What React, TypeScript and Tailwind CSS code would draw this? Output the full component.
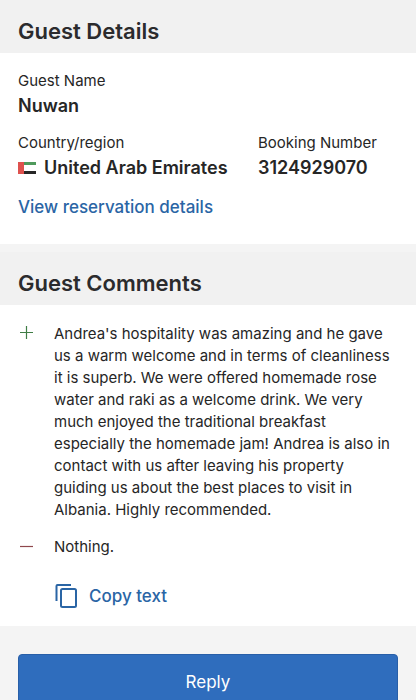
import type { ReactNode } from "react";

function SectionHeader({ children }: { children: ReactNode }) {
  return (
    <header className="bg-[#f1f1f1] px-[18px] pt-[17px] pb-2">
      <h2 className="text-[22px] leading-7 font-semibold text-[#2b2b2d]">
        {children}
      </h2>
    </header>
  );
}

function Detail({ label, children }: { label: string; children: ReactNode }) {
  return (
    <div>
      <dt className="text-[15px] leading-6">{label}</dt>
      <dd className="flex items-center gap-2 text-lg leading-[26px] font-semibold">
        {children}
      </dd>
    </div>
  );
}

function Flag() {
  return (
    <svg viewBox="0 0 18 12" className="h-3 w-[18px] shrink-0" aria-hidden>
      <path fill="#fff" d="M0 0h18v12H0z" />
      <path fill="#4f9a5c" d="M6 0h12v3H6z" />
      <path fill="#262626" d="M6 9h12v3H6z" />
      <path fill="#de524e" d="M0 0h6v12H0z" />
    </svg>
  );
}

export default function App() {
  return (
    <main className="min-h-screen bg-white font-['Inter',sans-serif] text-[#262626]">
      <section>
        <SectionHeader>Guest Details</SectionHeader>
        <dl className="grid grid-cols-[240px_1fr] gap-y-3 px-[18px] pt-4">
          <div className="col-span-2">
            <Detail label="Guest Name">Nuwan</Detail>
          </div>
          <Detail label="Country/region">
            <Flag />
            United Arab Emirates
          </Detail>
          <Detail label="Booking Number">3124929070</Detail>
        </dl>
        <a
          href="#reservation"
          className="mx-[18px] mt-3 mb-[23px] inline-block text-[17px] leading-7 font-medium text-[#2a65a5]"
        >
          View reservation details
        </a>
      </section>

      <section className="border-t-8 border-[#f4f4f4]">
        <SectionHeader>Guest Comments</SectionHeader>
        <div className="px-[18px] pt-[18px] pb-4">
          <div className="flex gap-5">
            <svg viewBox="0 0 16 22" className="h-[22px] w-4 shrink-0" fill="none" stroke="#3f7d45" strokeWidth="1.2" aria-hidden>
              <path d="M2 9.500h13M8.500 3v13" />
            </svg>
            <p className="text-[15px] leading-[22px]">
              Andrea's hospitality was amazing and he gave us a warm welcome
              and in terms of cleanliness it is superb. We were offered
              homemade rose water and raki as a welcome drink. We very much
              enjoyed the traditional breakfast especially the homemade jam!
              Andrea is also in contact with us after leaving his property
              guiding us about the best places to visit in Albania. Highly
              recommended.
            </p>
          </div>
          <div className="mt-[15px] flex gap-5">
            <svg viewBox="0 0 16 22" className="h-[22px] w-4 shrink-0" fill="none" stroke="#8f474d" strokeWidth="1.2" aria-hidden>
              <path d="M2 10.500h13" />
            </svg>
            <p className="text-[15px] leading-[22px]">Nothing.</p>
          </div>
          <button
            type="button"
            className="mt-6 ml-9 flex items-center gap-[11px] text-[17px] leading-7 font-medium text-[#2a65a5]"
          >
            <svg viewBox="0 0 24 28" className="h-7 w-6" fill="none" stroke="currentColor" strokeWidth="2" aria-hidden>
              <path d="M2.500 19V4a1 1 0 0 1 1-1H17" />
              <rect x="7" y="7" width="15" height="18" rx="1.500" />
            </svg>
            Copy text
          </button>
        </div>
      </section>

      <footer className="bg-[#f4f4f4] px-[18px] pt-7">
        <button
          type="button"
          className="h-[58px] w-full rounded-sm border border-[#285fa8] bg-[#2f6dbd] text-[17px] text-white"
        >
          Reply
        </button>
      </footer>
    </main>
  );
}
